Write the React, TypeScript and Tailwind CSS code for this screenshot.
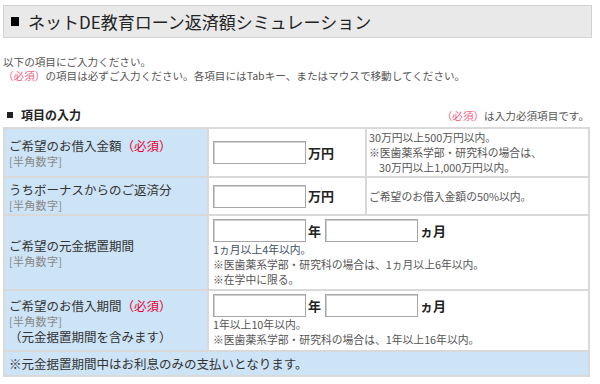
import type { ReactNode } from 'react';

const font = { fontFamily: '"Noto Sans CJK JP", "Noto Sans", sans-serif' };

// ─── Small pieces ──────────────────────────────────────────────────────────────
function Required() {
	return <span className="text-[#e60033]">（必須）</span>;
}

function Hint() {
	return <div className="text-[11px] leading-[14px] text-[#888] tracking-[0.3px]">[半角数字]</div>;
}

function NumInput({ unit }: { unit: string }) {
	return (
		<span className="inline-flex items-center">
			<input
				type="text"
				className="w-[93px] h-[23px] border border-[#a6a6a6] bg-white shadow-[inset_1px_1px_0_#cfcfcf] outline-none"
			/>
			<span className="ml-[2px] text-[13px] font-bold text-[#222]">{unit}</span>
		</span>
	);
}

function Label({ children }: { children: ReactNode }) {
	return (
		<td className="w-[204px] bg-[#cde3f6] border-2 border-[#d9d9d9] px-[4px] align-middle text-[12.5px] leading-[17px] text-[#333]">
			{children}
		</td>
	);
}

// ─── Simulation page ───────────────────────────────────────────────────────────
export default function App() {
	return (
		<div className="w-[600px] h-[384px] bg-white overflow-hidden pt-[5px] px-[3px]" style={font}>
			{/* Page title */}
			<div className="w-[589px] h-[33px] bg-[#e9e9e9] border border-[#d2d2d2] flex items-center pl-[7px]">
				<span className="w-[8px] h-[9px] bg-black mr-[9px]" />
				<h1 className="text-[17px] leading-none text-[#222]">ネットDE教育ローン返済額シミュレーション</h1>
			</div>

			{/* Intro */}
			<div className="mt-[17px] text-[10.6px] leading-[14px] text-[#555]">
				<p>以下の項目にご入力ください。</p>
				<p>
					<span className="text-[#f06080]">（必須）</span>
					の項目は必ずご入力ください。各項目にはTabキー、またはマウスで移動してください。
				</p>
			</div>

			{/* Section heading */}
			<div className="mt-[23px] flex items-end justify-between pr-[8px]">
				<div className="flex items-center text-[12px] font-bold text-[#222] pl-[4px]">
					<span className="w-[6px] h-[6px] bg-[#222] mr-[8px]" />
					項目の入力
				</div>
				<div className="text-[10.6px] text-[#555]">
					<span className="text-[#f06080]">（必須）</span>は入力必須項目です。
				</div>
			</div>

			{/* Form table */}
			<table className="mt-[3px] w-[587px] border-collapse border-2 border-[#d9d9d9]">
				<tbody>
					<tr className="h-[49px]">
						<Label>
							<div>
								ご希望のお借入金額
								<Required />
							</div>
							<Hint />
						</Label>
						<td className="w-[158px] border-2 border-[#d9d9d9] pl-[4px]">
							<NumInput unit="万円" />
						</td>
						<td className="border-2 border-[#d9d9d9] pl-[2px] text-[10.8px] leading-[15px] text-[#555]">
							<div>30万円以上500万円以内。</div>
							<div>※医歯薬系学部・研究科の場合は、</div>
							<div className="pl-[10px]">30万円以上1,000万円以内。</div>
						</td>
					</tr>
					<tr className="h-[38px]">
						<Label>
							<div>うちボーナスからのご返済分</div>
							<Hint />
						</Label>
						<td className="border-2 border-[#d9d9d9] pl-[4px]">
							<NumInput unit="万円" />
						</td>
						<td className="border-2 border-[#d9d9d9] pl-[2px] text-[10.8px] leading-[15px] text-[#555]">
							ご希望のお借入金額の50%以内。
						</td>
					</tr>
					<tr className="h-[74px]">
						<Label>
							<div>ご希望の元金据置期間</div>
							<Hint />
						</Label>
						<td colSpan={2} className="border-2 border-[#d9d9d9] pl-[4px] pt-[3px] pb-[2px] align-top">
							<div className="flex items-center gap-[4px]">
								<NumInput unit="年" />
								<NumInput unit="ヵ月" />
							</div>
							<div className="text-[10.8px] leading-[15px] text-[#555]">
								<div className="text-[#3e4f66]">1ヵ月以上4年以内。</div>
								<div>※医歯薬系学部・研究科の場合は、1ヵ月以上6年以内。</div>
								<div>※在学中に限る。</div>
							</div>
						</td>
					</tr>
					<tr className="h-[61px]">
						<Label>
							<div>
								ご希望のお借入期間
								<Required />
							</div>
							<Hint />
							<div>（元金据置期間を含みます）</div>
						</Label>
						<td colSpan={2} className="border-2 border-[#d9d9d9] pl-[4px] pt-[3px] pb-[2px] align-top">
							<div className="flex items-center gap-[4px]">
								<NumInput unit="年" />
								<NumInput unit="ヵ月" />
							</div>
							<div className="text-[10.8px] leading-[15px] text-[#555]">
								<div>1年以上10年以内。</div>
								<div>※医歯薬系学部・研究科の場合は、1年以上16年以内。</div>
							</div>
						</td>
					</tr>
					<tr className="h-[25px]">
						<td
							colSpan={3}
							className="bg-[#cde3f6] border-2 border-[#d9d9d9] px-[4px] text-[12.5px] leading-[17px] text-[#333]"
						>
							※元金据置期間中はお利息のみの支払いとなります。
						</td>
					</tr>
				</tbody>
			</table>
		</div>
	);
}
